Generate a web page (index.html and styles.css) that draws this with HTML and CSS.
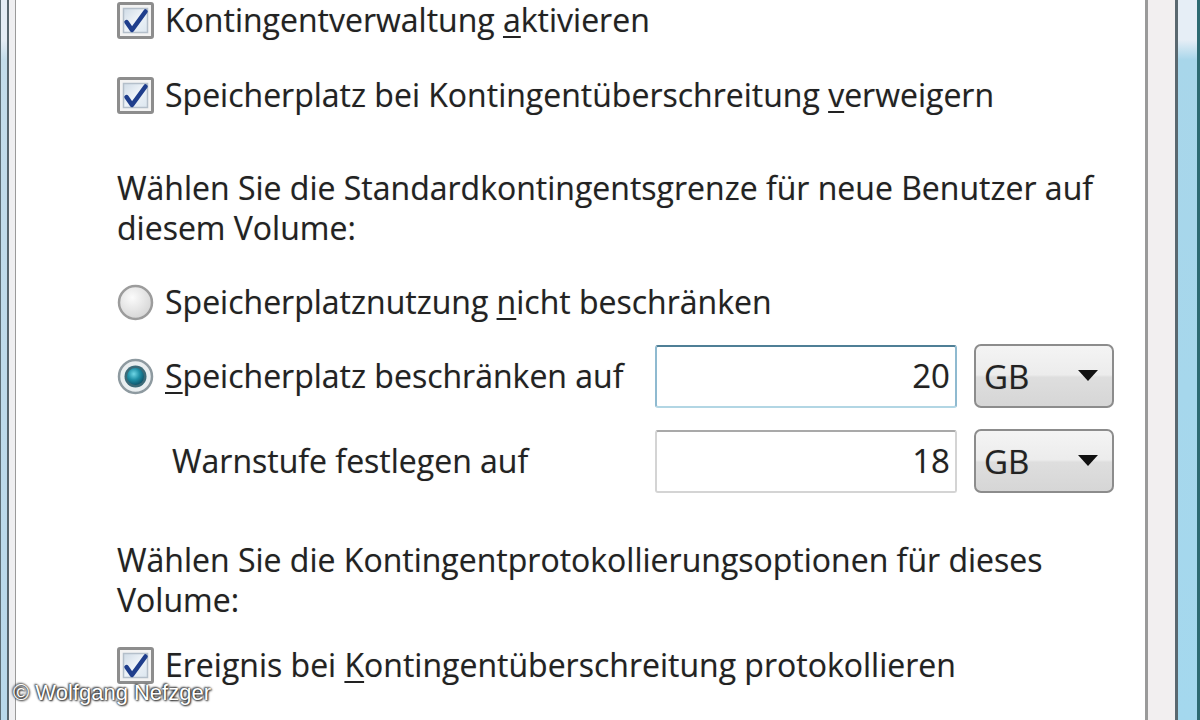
FILE: index.html
```html
<!DOCTYPE html>
<html lang="de">
<head>
<meta charset="utf-8">
<title>Kontingent</title>
<link rel="stylesheet" href="styles.css">
</head>
<body>
<div class="window">
  <div class="frame-left">
    <div class="fl-edge"></div><div class="fl-glass"></div><div class="fl-dark"></div><div class="fl-face"></div><div class="fl-line"></div>
  </div>
  <div class="content">
    <div class="row row-c1">
      <svg class="cb" viewBox="0 0 37 37" width="37" height="37"><defs><linearGradient id="g1" x1="0" y1="0" x2="1" y2="1"><stop offset="0" stop-color="#cfdbe6"/><stop offset="0.5" stop-color="#eef3f8"/><stop offset="1" stop-color="#dbe6ef"/></linearGradient></defs><rect x="1.5" y="1.5" width="34" height="34" rx="1.5" fill="#f3f3f3" stroke="#8d8d8d" stroke-width="3"/><rect x="6.5" y="6.5" width="24" height="24" fill="url(#g1)" stroke="#b4bfca" stroke-width="1.5"/><path d="M9.5 20 L15 28 L28.5 9.5" stroke="#1f3e8c" stroke-width="4.5" fill="none" stroke-linecap="round" stroke-linejoin="round"/></svg>
      <span class="label">Kontingentverwaltung <u>a</u>ktivieren</span>
    </div>
    <div class="row row-c2">
      <svg class="cb" viewBox="0 0 37 37" width="37" height="37"><rect x="1.5" y="1.5" width="34" height="34" rx="1.5" fill="#f3f3f3" stroke="#8d8d8d" stroke-width="3"/><rect x="6.5" y="6.5" width="24" height="24" fill="url(#g1)" stroke="#b4bfca" stroke-width="1.5"/><path d="M9.5 20 L15 28 L28.5 9.5" stroke="#1f3e8c" stroke-width="4.5" fill="none" stroke-linecap="round" stroke-linejoin="round"/></svg>
      <span class="label">Speicherplatz bei Kontingentüberschreitung <u>v</u>erweigern</span>
    </div>
    <p class="para para-1">Wählen Sie die Standardkontingentsgrenze für neue Benutzer auf<br>diesem Volume:</p>
    <div class="row row-r1">
      <svg class="rb" viewBox="0 0 37 37" width="37" height="37"><defs><radialGradient id="rg0" cx="0.4" cy="0.35" r="0.7"><stop offset="0" stop-color="#fbfbfb"/><stop offset="1" stop-color="#d4d4d4"/></radialGradient></defs><circle cx="18.5" cy="18.5" r="16.5" fill="url(#rg0)" stroke="#9c9c9c" stroke-width="2.5"/></svg>
      <span class="label">Speicherplatznutzung <u>n</u>icht beschränken</span>
    </div>
    <div class="row row-r2">
      <div class="rlab">
        <svg class="rb" viewBox="0 0 37 37" width="37" height="37"><defs><radialGradient id="rg1" cx="0.4" cy="0.35" r="0.7"><stop offset="0" stop-color="#6fd6e6"/><stop offset="0.5" stop-color="#1f8fa6"/><stop offset="1" stop-color="#0c4f66"/></radialGradient></defs><circle cx="18.5" cy="18.5" r="16.5" fill="#e9eef0" stroke="#8e9aa0" stroke-width="2.5"/><circle cx="18.5" cy="18.5" r="11" fill="#3c6a78"/><circle cx="18.5" cy="18.5" r="8.5" fill="url(#rg1)"/></svg>
        <span class="label"><u>S</u>peicherplatz beschränken auf</span>
      </div>
      <div class="field focus">20</div>
      <div class="combo"><span>GB</span><svg class="arrow" viewBox="0 0 20 12" width="20" height="12"><path d="M0 0 H20 L10 11 Z" fill="#111"/></svg></div>
    </div>
    <div class="row row-w">
      <div class="wlab"><span class="label">Warnstufe festlegen auf</span></div>
      <div class="field">18</div>
      <div class="combo"><span>GB</span><svg class="arrow" viewBox="0 0 20 12" width="20" height="12"><path d="M0 0 H20 L10 11 Z" fill="#111"/></svg></div>
    </div>
    <p class="para para-2">Wählen Sie die Kontingentprotokollierungsoptionen für dieses<br>Volume:</p>
    <div class="row row-c3">
      <svg class="cb" viewBox="0 0 37 37" width="37" height="37"><rect x="1.5" y="1.5" width="34" height="34" rx="1.5" fill="#f3f3f3" stroke="#8d8d8d" stroke-width="3"/><rect x="6.5" y="6.5" width="24" height="24" fill="url(#g1)" stroke="#b4bfca" stroke-width="1.5"/><path d="M9.5 20 L15 28 L28.5 9.5" stroke="#1f3e8c" stroke-width="4.5" fill="none" stroke-linecap="round" stroke-linejoin="round"/></svg>
      <span class="label">Ereignis bei <u>K</u>ontingentüberschreitung protokollieren</span>
    </div>
  </div>
  <div class="frame-right">
    <div class="fr-line"></div><div class="fr-face"></div><div class="fr-dark"></div><div class="fr-glass"></div><div class="fr-edge"></div>
  </div>
  <div class="credit">© Wolfgang Nefzger</div>
</div>
</body>
</html>
```

FILE: styles.css
```css
html, body {
  margin: 0;
  padding: 0;
  width: 1200px;
  height: 720px;
  overflow: hidden;
  background: #ffffff;
}
.window {
  position: relative;
  display: flex;
  width: 1200px;
  height: 720px;
  font-family: "Open Sans", "Noto Sans", sans-serif;
  color: #222222;
}
.frame-left {
  display: flex;
  width: 16px;
  flex: none;
}
.fl-edge { width: 1px; background: #5c6c74; }
.fl-glass { width: 6px; background: linear-gradient(#e4ecf4 0, #e4ecf4 40px, #c3dcea 60px, #b8d8ea 100%); }
.fl-dark { width: 2px; background: #56646c; }
.fl-face { width: 6px; background: #efeff1; }
.fl-line { width: 1px; background: #9a9a9a; }
.frame-right {
  display: flex;
  width: 55px;
  flex: none;
}
.fr-line { width: 3px; background: #9a9a9a; }
.fr-face { width: 27px; background: #f2eff0; }
.fr-dark { width: 3px; background: #5a6870; }
.fr-glass { width: 19px; background: linear-gradient(#e6eef6 0, #e6eef6 40px, #a8d6ea 60px, #a4d8ee 100%); }
.fr-edge { width: 3px; background: #2d6a72; }
.content {
  flex: 1;
  background: #ffffff;
  padding-left: 101px;
  display: flex;
  flex-direction: column;
}
.row {
  display: flex;
  align-items: center;
}
.cb, .rb { flex: none; }
.label {
  flex: none;
  font-size: 32px;
  line-height: 40px;
  margin-left: 11px;
  white-space: nowrap;
  text-shadow: 0 0 1px rgba(0, 0, 0, 0.25);
}
.label u { text-decoration-thickness: 2px; text-underline-offset: 4px; }
.row-c1 { height: 40px; margin-top: 0; }
.row-c2 { height: 40px; margin-top: 35px; }
.para {
  margin: 53px 0 0 0;
  font-size: 32px;
  line-height: 40px;
  white-space: nowrap;
  text-shadow: 0 0 1px rgba(0, 0, 0, 0.25);
}
.row-r1 { height: 40px; margin-top: 34px; }
.row-r2 { height: 64px; margin-top: 22px; }
.rlab { flex: none; display: flex; align-items: center; width: 538px; }
.wlab { flex: none; width: 538px; padding-left: 44px; box-sizing: border-box; }
.field {
  flex: none;
  box-sizing: border-box;
  width: 302px;
  height: 63px;
  border: 2px solid #d4d4d4;
  border-top-color: #a9a9a9;
  border-radius: 3px;
  font-size: 33px;
  text-align: right;
  padding-right: 5px;
  line-height: 58px;
  background: #fff;
  text-shadow: 0 0 1px rgba(0, 0, 0, 0.25);
}
.field.focus {
  border-color: #8fbad0;
  border-top-color: #4f7f96;
  border-bottom-color: #b2d6e4;
}
.combo {
  flex: none;
  box-sizing: border-box;
  width: 140px;
  height: 64px;
  margin-left: 17px;
  border: 2px solid #8c8c8c;
  border-radius: 7px;
  background: linear-gradient(#f4f4f4 0, #ececec 48%, #dedede 52%, #d6d6d6 100%);
  display: flex;
  align-items: center;
  justify-content: space-between;
  padding: 0 14px 0 8px;
  font-size: 33px;
  text-shadow: 0 0 1px rgba(0, 0, 0, 0.25);
}
.arrow { flex: none; }
.row-w { height: 64px; margin-top: 21px; }
.para-2 { margin-top: 47px; }
.row-c3 { height: 40px; margin-top: 25px; }
.credit {
  position: absolute;
  left: 13px;
  top: 680px;
  font-family: "Liberation Sans", Arial, sans-serif;
  font-size: 22px;
  color: #ffffff;
  text-shadow: 0 0 2px #222, 1px 1px 2px #222, -1px -1px 2px #444;
}
```
